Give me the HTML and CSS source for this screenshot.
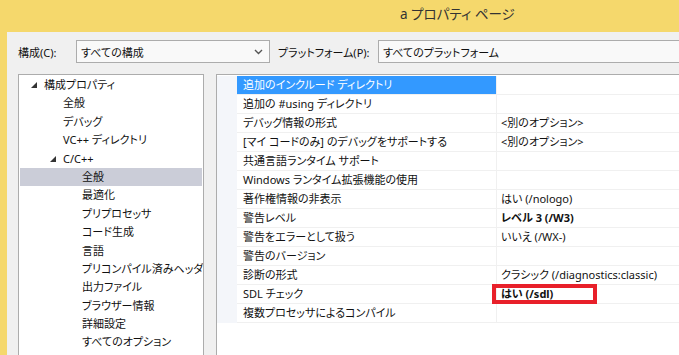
FILE: index.html
```html
<!DOCTYPE html>
<html lang="ja">
<head>
  <meta charset="UTF-8">
  <title>a プロパティ ページ</title>
  <link rel="stylesheet" href="styles.css">
</head>
<body>
  <div class="window">
    <div class="titlebar">a プロパティ ページ</div>
    <div class="client">
      <!-- 構成 / プラットフォーム -->
      <div class="toolbar">
        <span class="tb-label label-config">構成(C):</span>
        <div class="combo combo-config">
          <span>すべての構成</span>
          <svg class="chev" width="9" height="6" viewBox="0 0 9 6"><path d="M1 1 L4.5 4.5 L8 1" fill="none" stroke="#555" stroke-width="1.4"/></svg>
        </div>
        <span class="tb-label label-platform">プラットフォーム(P):</span>
        <div class="combo combo-platform">
          <span>すべてのプラットフォーム</span>
        </div>
      </div>

      <div class="panes">
        <!-- 左のツリー -->
        <ul class="tree">
          <li class="lv0"><svg class="tri" width="6" height="6" viewBox="0 0 6 6"><polygon points="6,0 6,6 0,6" fill="#333"/></svg>構成プロパティ</li>
          <li class="lv1">全般</li>
          <li class="lv1">デバッグ</li>
          <li class="lv1">VC++ ディレクトリ</li>
          <li class="lv1 open"><svg class="tri" width="6" height="6" viewBox="0 0 6 6"><polygon points="6,0 6,6 0,6" fill="#333"/></svg>C/C++</li>
          <li class="lv2 selected">全般</li>
          <li class="lv2">最適化</li>
          <li class="lv2">プリプロセッサ</li>
          <li class="lv2">コード生成</li>
          <li class="lv2">言語</li>
          <li class="lv2">プリコンパイル済みヘッダー</li>
          <li class="lv2">出力ファイル</li>
          <li class="lv2">ブラウザー情報</li>
          <li class="lv2">詳細設定</li>
          <li class="lv2">すべてのオプション</li>
          <li class="lv2">コマンド ライン</li>
        </ul>

        <!-- 右のプロパティグリッド -->
        <div class="grid">
          <div class="row selected"><div class="gutter"></div><div class="name">追加のインクルード ディレクトリ</div><div class="value"></div></div>
          <div class="row"><div class="gutter"></div><div class="name">追加の #using ディレクトリ</div><div class="value"></div></div>
          <div class="row"><div class="gutter"></div><div class="name">デバッグ情報の形式</div><div class="value">&lt;別のオプション&gt;</div></div>
          <div class="row"><div class="gutter"></div><div class="name">[マイ コードのみ] のデバッグをサポートする</div><div class="value">&lt;別のオプション&gt;</div></div>
          <div class="row"><div class="gutter"></div><div class="name">共通言語ランタイム サポート</div><div class="value"></div></div>
          <div class="row"><div class="gutter"></div><div class="name">Windows ランタイム拡張機能の使用</div><div class="value"></div></div>
          <div class="row"><div class="gutter"></div><div class="name">著作権情報の非表示</div><div class="value">はい (/nologo)</div></div>
          <div class="row"><div class="gutter"></div><div class="name">警告レベル</div><div class="value bold">レベル 3 (/W3)</div></div>
          <div class="row"><div class="gutter"></div><div class="name">警告をエラーとして扱う</div><div class="value">いいえ (/WX-)</div></div>
          <div class="row"><div class="gutter"></div><div class="name">警告のバージョン</div><div class="value"></div></div>
          <div class="row"><div class="gutter"></div><div class="name">診断の形式</div><div class="value">クラシック (/diagnostics:classic)</div></div>
          <div class="row"><div class="gutter"></div><div class="name">SDL チェック</div><div class="value bold marked">はい (/sdl)<span class="mark"></span></div></div>
          <div class="row"><div class="gutter"></div><div class="name">複数プロセッサによるコンパイル</div><div class="value"></div></div>
        </div>
      </div>
    </div>
  </div>
</body>
</html>
```

FILE: styles.css
```css
/* Windows 8 風プロパティページ */
html, body {
  margin: 0;
  height: 100%;
  overflow: hidden;
}
body {
  background-color: #f5d86c;
  font-family: "Noto Sans", "Noto Sans CJK JP", sans-serif;
  font-feature-settings: "palt";
  font-size: 11px;
  color: #111;
}
.window {
  height: 100%;
  display: flex;
  flex-direction: column;
  padding-left: 7px;
}
.titlebar {
  height: 32px;
  line-height: 28px;
  padding-left: 393px;
  font-size: 13.5px;
  color: #333;
  white-space: nowrap;
}
.client {
  flex: 1;
  background-color: #f0f0f0;
  padding: 8px 0 0 11px;
  display: flex;
  flex-direction: column;
  min-height: 0;
}
.toolbar {
  display: flex;
  align-items: center;
  height: 23px;
  white-space: nowrap;
}
.label-config {
  width: 58px;
}
.label-platform {
  width: 100px;
}
.combo {
  height: 23px;
  box-sizing: border-box;
  border: 1px solid #acacac;
  background-color: #f9f9f9;
  display: flex;
  align-items: center;
  padding-left: 4px;
}
.combo-config {
  width: 194px;
  margin-right: 8px;
  justify-content: space-between;
  padding-right: 6px;
}
.combo-platform {
  flex: 1;
  margin-right: -40px;
}
.chev {
  display: block;
}
.panes {
  flex: 1;
  display: flex;
  gap: 12px;
  margin-top: 11px;
  min-height: 0;
}
.tree {
  list-style: none;
  margin: 0;
  padding: 1px 1px 0;
  width: 186px;
  box-sizing: border-box;
  background-color: #fff;
  border: 1px solid #acacac;
  border-bottom: none;
  overflow: hidden;
}
.tree li {
  height: 18.4px;
  line-height: 18.4px;
  white-space: nowrap;
  position: relative;
}
.tree .tri {
  position: absolute;
  top: 6px;
}
.tree .lv0 { padding-left: 24px; }
.tree .lv0 .tri { left: 11px; }
.tree .lv1 { padding-left: 43px; }
.tree .lv1 .tri { left: 30px; }
.tree .lv2 { padding-left: 62px; }
.tree .selected {
  background-color: #cbcdd8;
}
.grid {
  flex: 1;
  background-color: #fff;
  border: 1px solid #acacac;
  border-bottom: none;
  border-right: none;
  padding-top: 1px;
  overflow: hidden;
}
.row {
  display: grid;
  grid-template-columns: 20px 260px 1fr;
  height: 19px;
  line-height: 18px;
  white-space: nowrap;
}
.gutter {
  background-color: #f4f6fa;
}
.name, .value {
  border-bottom: 1px solid #f0f0f0;
}
.name {
  padding-left: 6px;
  border-right: 1px solid #f0f0f0;
  overflow: hidden;
}
.value {
  padding-left: 4px;
  position: relative;
}
.row.selected .name {
  background-color: #3399ff;
  color: #fff;
}
.bold {
  font-weight: bold;
}
.mark {
  position: absolute;
  left: -5px;
  top: -1px;
  width: 105px;
  height: 20px;
  box-sizing: border-box;
  border: 4px solid #e8202a;
}
```
